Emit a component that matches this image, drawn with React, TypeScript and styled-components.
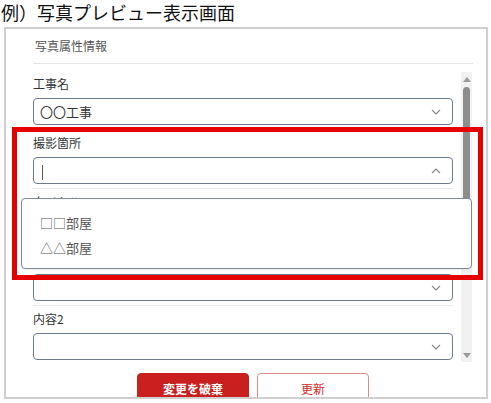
import React from 'react';
import styled, { createGlobalStyle, css } from 'styled-components';

const GlobalStyle = createGlobalStyle`
  body {
    margin: 0;
    background: #fff;
    font-family: "Noto Sans CJK JP", "Noto Sans", sans-serif;
    color: #333;
  }
`;

const PageTitle = styled.h1`
  margin: 0 0 3px;
  padding-left: 1px;
  font-size: 18px;
  line-height: 24px;
  font-weight: 400;
  color: #111;
`;

const Panel = styled.section`
  position: relative;
  box-sizing: border-box;
  margin-left: 4px;
  width: 484px;
  height: 372px;
  border: 2px solid #cfcfcf;
  background: #fff;
  overflow: hidden;
`;

const PanelHeader = styled.div`
  box-sizing: border-box;
  height: 34px;
  padding: 9px 0 0 29px;
  font-size: 12px;
  line-height: 16px;
  color: #555;
`;

const Rule = styled.div<{ $inset?: boolean }>`
  height: 1px;
  background: #e4e4e4;
  ${({ $inset }) =>
    $inset &&
    css`
      margin: 0 13px 0 27px;
    `}
`;

const ScrollRegion = styled.div`
  display: flex;
  align-items: flex-start;
  height: 290px;
  margin-top: 8px;
  padding: 0 14px 0 27px;
  overflow: hidden;
`;

const FormColumn = styled.div`
  flex: 0 0 420px;
  display: flex;
  flex-direction: column;
  padding-top: 3px;
`;

const Field = styled.div`
  display: flex;
  flex-direction: column;

  & + & {
    margin-top: 4px;
  }
`;

const FieldLabel = styled.label`
  font-size: 12px;
  line-height: 18px;
  color: #333;
  margin-bottom: 5px;
`;

const SelectBox = styled.div`
  box-sizing: border-box;
  display: flex;
  align-items: center;
  height: 27px;
  padding: 0 11px 0 6px;
  border: 1px solid #6f7b8c;
  border-radius: 4px;
  background: #fff;
`;

const SelectValue = styled.span`
  flex: 1;
  font-size: 13px;
  line-height: 25px;
  color: #333;
`;

const TextCaret = styled.span`
  display: inline-block;
  width: 1px;
  height: 15px;
  margin-left: 2px;
  vertical-align: middle;
  background: #555;
`;

const FieldRule = styled.div`
  height: 1px;
  margin-top: 4px;
  background: #e8e8e8;
`;

const Listbox = styled.ul`
  position: relative;
  z-index: 3;
  margin: -18px -19px 5px -12px;
  padding: 11px 0 8px;
  list-style: none;
  border: 1px solid #7f8a99;
  border-radius: 4px;
  background: #fff;
  box-shadow: 0 1px 2px rgba(0, 0, 0, 0.08);
`;

const ListOption = styled.li`
  height: 25px;
  padding-left: 18px;
  font-size: 13px;
  line-height: 25px;
  color: #555;
`;

const Scrollbar = styled.div`
  flex: 0 0 11px;
  display: flex;
  flex-direction: column;
  align-items: center;
  height: 290px;
  margin-left: 8px;
  background: #f1f1f1;
`;

const ScrollArrow = styled.div<{ $dir: 'up' | 'down' }>`
  display: flex;
  align-items: center;
  justify-content: center;
  height: 14px;

  &::before {
    content: '';
    width: 0;
    height: 0;
    border-left: 4px solid transparent;
    border-right: 4px solid transparent;
    ${({ $dir }) =>
      $dir === 'up'
        ? css`
            border-bottom: 5px solid #9a9a9a;
          `
        : css`
            border-top: 5px solid #9a9a9a;
          `}
  }
`;

const ScrollThumb = styled.div`
  width: 7px;
  height: 143px;
  margin-top: 1px;
  border-radius: 4px 4px 0 0;
  background: #8d8d8d;
`;

const ScrollSpacer = styled.div`
  flex: 1;
`;

const Footer = styled.div`
  display: flex;
  justify-content: center;
  gap: 8px;
  margin-top: 11px;
  padding: 0 13px 0 27px;
`;

const ActionButton = styled.button<{ $primary?: boolean }>`
  box-sizing: border-box;
  width: 112px;
  height: 30px;
  border-radius: 4px;
  font-family: inherit;
  font-size: 12px;
  ${({ $primary }) =>
    $primary
      ? css`
          border: 1px solid #c91f1f;
          background: #c91f1f;
          color: #fff;
          font-weight: 600;
        `
      : css`
          border: 1px solid #e48a8a;
          background: #fff;
          color: #d12a2a;
        `}
`;

const Highlight = styled.div`
  position: absolute;
  z-index: 5;
  left: 6px;
  top: 98px;
  box-sizing: border-box;
  width: 471px;
  height: 153px;
  border: 5px solid #e60000;
  pointer-events: none;
`;

function Chevron({ up }: { up?: boolean }) {
  return (
    <svg width="10" height="6" viewBox="0 0 10 6">
      <polyline
        points={up ? '1,5 5,1 9,5' : '1,1 5,5 9,1'}
        fill="none"
        stroke="#8a8a8a"
        strokeWidth="1.2"
      />
    </svg>
  );
}

export default function App() {
  return (
    <>
      <GlobalStyle />
      <PageTitle>例）写真プレビュー表示画面</PageTitle>
      <Panel>
        <PanelHeader>写真属性情報</PanelHeader>
        <Rule $inset />
        <ScrollRegion>
          <FormColumn>
            <Field>
              <FieldLabel>工事名</FieldLabel>
              <SelectBox>
                <SelectValue>〇〇工事</SelectValue>
                <Chevron />
              </SelectBox>
              <FieldRule />
            </Field>
            <Field>
              <FieldLabel>撮影箇所</FieldLabel>
              <SelectBox>
                <SelectValue>
                  <TextCaret />
                </SelectValue>
                <Chevron up />
              </SelectBox>
              <FieldRule />
            </Field>
            <Field>
              <FieldLabel>タイトル</FieldLabel>
              <Listbox>
                <ListOption>□□部屋</ListOption>
                <ListOption>△△部屋</ListOption>
              </Listbox>
              <SelectBox>
                <SelectValue />
                <Chevron />
              </SelectBox>
              <FieldRule />
            </Field>
            <Field>
              <FieldLabel>内容2</FieldLabel>
              <SelectBox>
                <SelectValue />
                <Chevron />
              </SelectBox>
            </Field>
          </FormColumn>
          <Scrollbar>
            <ScrollArrow $dir="up" />
            <ScrollThumb />
            <ScrollSpacer />
            <ScrollArrow $dir="down" />
          </Scrollbar>
        </ScrollRegion>
        <Footer>
          <ActionButton $primary>変更を破棄</ActionButton>
          <ActionButton>更新</ActionButton>
        </Footer>
        <Highlight />
      </Panel>
    </>
  );
}
